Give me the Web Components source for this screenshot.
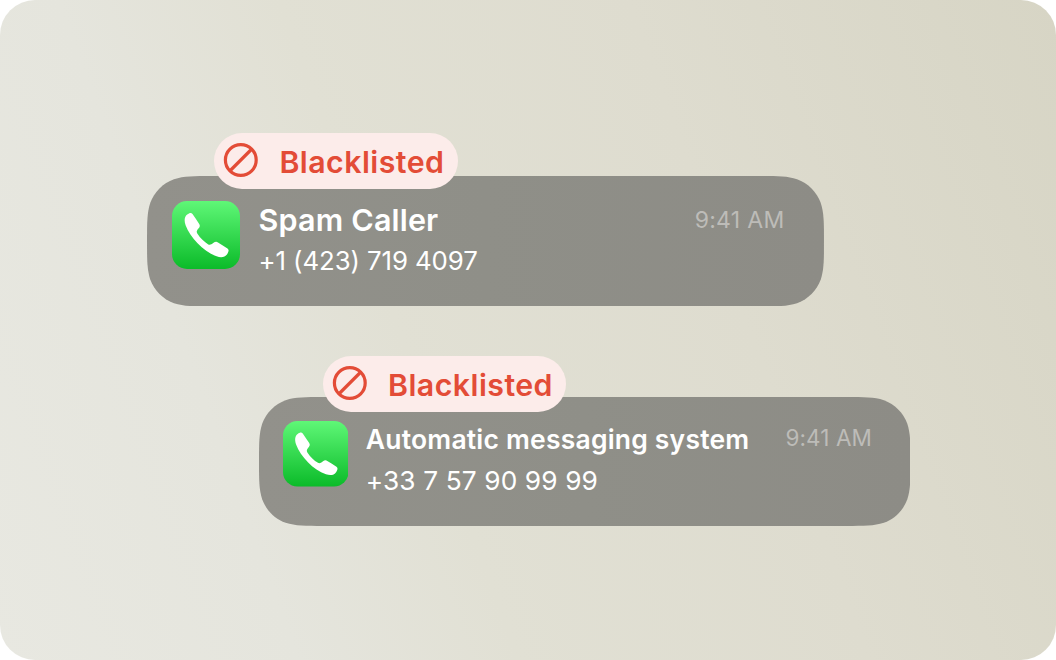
<!DOCTYPE html>
<html lang="en">
<head>
<meta charset="utf-8">
<title>Blacklisted calls</title>
<style>
html,body{margin:0;background:#fff}
body{width:1056px;height:660px;overflow:hidden}
</style>
</head>
<body>
<call-stage>
  <call-card w="677" h="130.4" icon="68" style="margin-left:147px;--pad:25px 39.5px 0 25px;--gap:18.5px;--name:30.5px;--name-sp:.18px;--num:25.8px;--num-sp:-.08px;--num-top:3.3px;--copy-top:0px;--time:23px;--time-sp:.3px;--time-top:8px">
    <status-badge slot="badge" style="left:67.4px;top:-43.5px">Blacklisted</status-badge>
    <span slot="name">Spam Caller</span>
    <span slot="number">+1 (423) 719 4097</span>
    <span slot="time">9:41 AM</span>
  </call-card>
  <call-card w="651.5" h="129" icon="65.5" style="margin-left:258.5px;--pad:24px 38px 0 24.3px;--gap:17.5px;--name:26.5px;--name-sp:.2px;--num:26.3px;--num-sp:.1px;--num-top:4.7px;--copy-top:-1.6px;--time:22.5px;--time-sp:.1px;--time-top:6px">
    <status-badge slot="badge" style="left:64.5px;top:-41.5px">Blacklisted</status-badge>
    <span slot="name">Automatic messaging system</span>
    <span slot="number">+33 7 57 90 99 99</span>
    <span slot="time">9:41 AM</span>
  </call-card>
</call-stage>
<script>
class CallStage extends HTMLElement{
  constructor(){
    super();
    this.attachShadow({mode:'open'}).innerHTML=`<style>
      :host{display:flex;flex-direction:column;align-items:flex-start;gap:90.8px;box-sizing:border-box;width:1056px;height:660px;padding-top:176px;border-radius:35px;
        background:linear-gradient(70deg,#e8e8e1 0%,#e5e5dd 23%,#e1e0d4 40%,#dedccf 67%,#d7d5c5 100%)}
    </style><slot></slot>`;
  }
}
class PhoneIcon extends HTMLElement{
  constructor(){
    super();
    this.attachShadow({mode:'open'}).innerHTML=`<style>
      :host{display:block;flex:none}
      svg{display:block;width:100%;height:100%}
    </style>
    <svg viewBox="0 0 68 68">
      <defs><linearGradient id="g" x1="0" y1="0" x2="0" y2="1"><stop offset="0" stop-color="#5ff777"/><stop offset="1" stop-color="#0bbb29"/></linearGradient></defs>
      <rect width="68" height="68" rx="15" fill="url(#g)"/>
      <path fill="#fff" d="M15.2 13.4C17.4 11.8 19.3 11.2 20.5 13C22.6 16.1 25 19.6 27.2 22.9C28.3 24.6 27.8 25.8 26.4 27.6C25 29.4 24.1 30.6 25.3 32.6C28.4 37.4 32.3 41 36.3 43.4C37.9 44.3 39.3 43.5 41.2 42.1C43 40.8 44.3 40.3 46 41.4C49.2 43.3 52.4 45.4 55.5 47.5C57.2 48.7 56.8 50.6 55.3 52.9C52.8 56.5 49 56.8 44.6 55.3C31.5 50.8 18.2 36.7 13.7 24.6C11.9 19.4 12.4 15.6 15.2 13.4Z"/>
    </svg>`;
  }
}
class StatusBadge extends HTMLElement{
  constructor(){
    super();
    this.attachShadow({mode:'open'}).innerHTML=`<style>
      :host{display:flex;align-items:center;box-sizing:border-box;position:absolute;width:243.2px;height:56.5px;padding-left:9px;gap:20px;border-radius:29px;background:#fcecea;color:#e34c37;
        font:600 30.3px/56px Inter,sans-serif;letter-spacing:.46px;white-space:nowrap}
      svg{display:block;flex:none;width:36px;height:36px;margin-top:-1.4px}
      span{padding-top:3px}
    </style>
    <svg viewBox="0 0 36 36" fill="none" stroke="currentColor" stroke-width="3.2"><circle cx="17.8" cy="18" r="15.4"/><path d="M6.8 29L28.8 7"/></svg>
    <span><slot></slot></span>`;
  }
}
class CallCard extends HTMLElement{
  constructor(){
    super();
    const w=+this.getAttribute('w'),h=+this.getAttribute('h'),i=this.getAttribute('icon');
    const r=h/2/1.528665;
    const a=1.528665*r,b=1.08849*r,c=.868407*r,d=.631494*r,e=.074911*r,f=.372824*r,g=.16906*r;
    const path=`M${a} 0H${w-a}C${w-b} 0 ${w-c} 0 ${w-d} ${e}C${w-f} ${g} ${w-g} ${f} ${w-e} ${d}C${w} ${c} ${w} ${b} ${w} ${a}`
      +`C${w} ${h-b} ${w} ${h-c} ${w-e} ${h-d}C${w-g} ${h-f} ${w-f} ${h-g} ${w-d} ${h-e}C${w-c} ${h} ${w-b} ${h} ${w-a} ${h}H${a}`
      +`C${b} ${h} ${c} ${h} ${d} ${h-e}C${f} ${h-g} ${g} ${h-f} ${e} ${h-d}C0 ${h-c} 0 ${h-b} 0 ${a}`
      +`C0 ${b} 0 ${c} ${e} ${d}C${g} ${f} ${f} ${g} ${d} ${e}C${c} 0 ${b} 0 ${a} 0Z`;
    this.attachShadow({mode:'open'}).innerHTML=`<style>
      :host{display:flex;align-items:flex-start;gap:var(--gap);position:relative;z-index:0;flex:none;box-sizing:border-box;width:${w}px;height:${h}px;padding:var(--pad);color:#fff;font-family:Inter,sans-serif;white-space:nowrap}
      .bg{position:absolute;inset:0;width:100%;height:100%;z-index:-1}
      phone-icon{width:${i}px;height:${i}px}
      .copy{flex:1;display:flex;flex-direction:column;margin-top:var(--copy-top)}
      .name{font-size:var(--name);font-weight:600;line-height:38px;letter-spacing:var(--name-sp)}
      .num{font-size:var(--num);font-weight:400;line-height:38px;letter-spacing:var(--num-sp);margin-top:var(--num-top)}
      .time{font-size:var(--time);font-weight:400;line-height:30px;color:#bdbcb8;letter-spacing:var(--time-sp);margin-top:calc(var(--time-top) - 4px)}
    </style>
    <svg class="bg" viewBox="0 0 ${w} ${h}"><defs><linearGradient id="c"><stop stop-color="#92918b"/><stop offset=".5" stop-color="#8f8f88"/><stop offset="1" stop-color="#8d8c86"/></linearGradient></defs><path d="${path}" fill="url(#c)"/></svg>
    <phone-icon></phone-icon>
    <div class="copy"><div class="name"><slot name="name"></slot></div><div class="num"><slot name="number"></slot></div></div>
    <div class="time"><slot name="time"></slot></div>
    <slot name="badge"></slot>`;
  }
}
customElements.define('call-stage',CallStage);
customElements.define('phone-icon',PhoneIcon);
customElements.define('status-badge',StatusBadge);
customElements.define('call-card',CallCard);
</script>
</body>
</html>
